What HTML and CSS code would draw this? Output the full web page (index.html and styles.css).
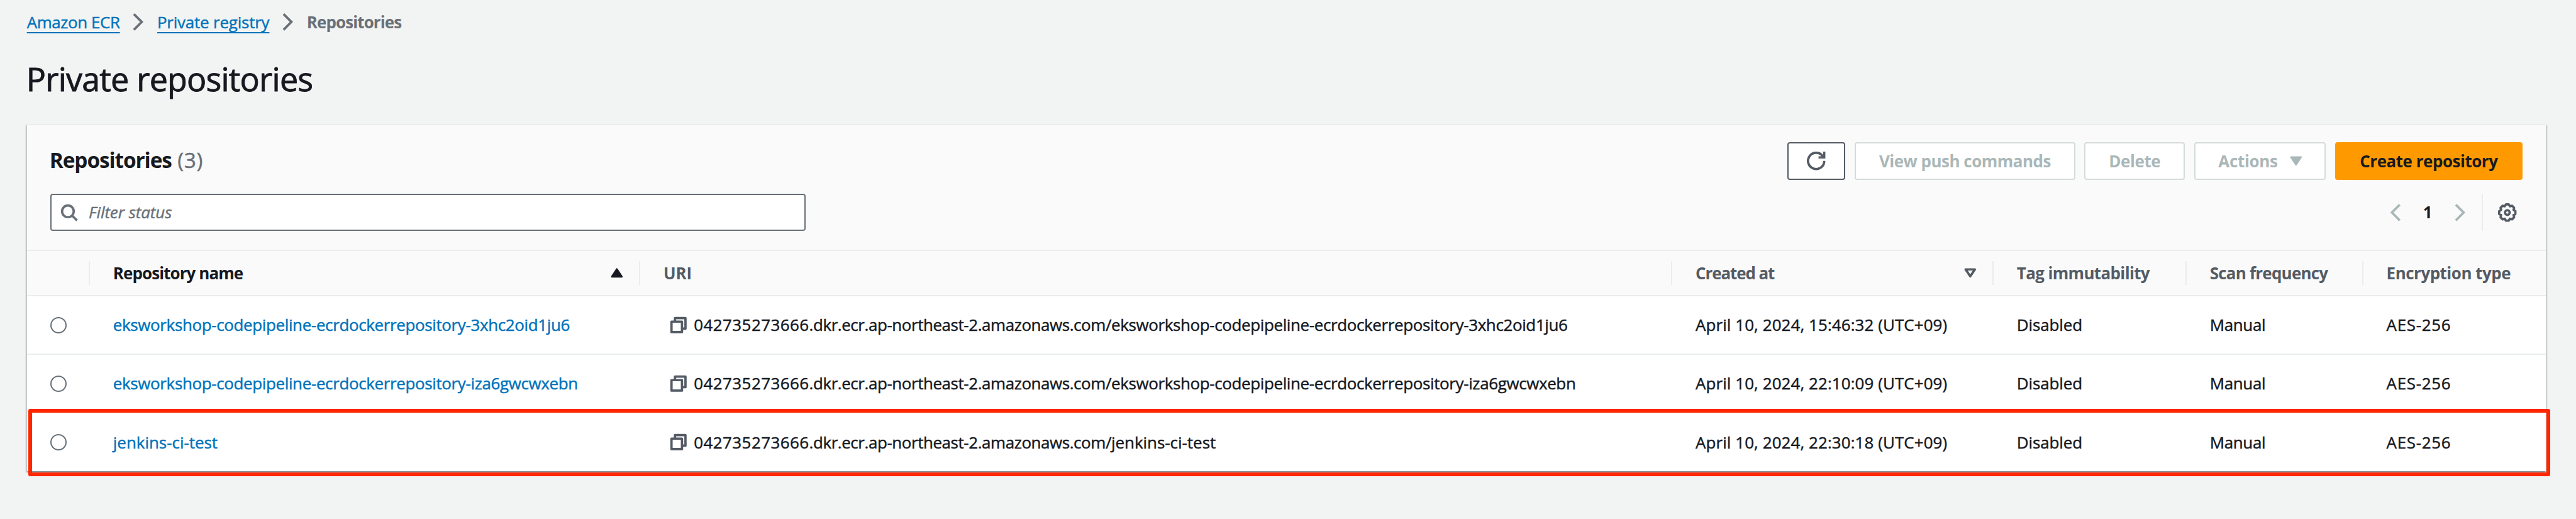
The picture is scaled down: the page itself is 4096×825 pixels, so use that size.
FILE: index.html
```html
<!DOCTYPE html>
<html lang="en">
<head>
<meta charset="utf-8">
<title>Private repositories</title>
<link rel="stylesheet" href="styles.css">
</head>
<body>
<svg class="sprite" aria-hidden="true">
  <symbol id="angle-right" viewBox="0 0 32 32"><path class="line" d="M8.5 2.5 22 16 8.5 29.5"/></symbol>
  <symbol id="angle-left" viewBox="0 0 32 32"><path class="line" d="M23.5 2.5 10 16 23.5 29.5"/></symbol>
  <symbol id="search" viewBox="0 0 32 32"><circle class="line" cx="14" cy="14" r="10"/><path class="line" d="M21 21l8.7 8.7"/></symbol>
  <symbol id="refresh" viewBox="0 0 32 32"><path class="line" d="M30 16A14 14 0 1 1 27.4 7.8M30 0v10H20"/><path class="solid" d="M24 4.5 29 10H25Z"/></symbol>
  <symbol id="caret-up" viewBox="0 0 32 32"><path class="solid round" d="M16 9.5 24.5 22.5H7.500Z"/></symbol>
  <symbol id="caret-down" viewBox="0 0 32 32"><path class="solid round" d="M16 22.500 7.500 9.500H24.500Z"/></symbol>
  <symbol id="caret-down-outline" viewBox="0 0 32 32"><path class="line join" d="M8 10H24L16 21.800Z"/></symbol>
  <symbol id="copy" viewBox="0 0 32 32"><path class="line join" d="M4 10H22V28H4ZM10 10V4H28V22H22"/></symbol>
  <symbol id="gear" viewBox="-16 -16 32 32"><path class="line join" d="M-2.400-14H2.400L4.400-10.700 8.200-11.600 11.600-8.200 10.700-4.400 14-2.400V2.400L10.700 4.400 11.600 8.200 8.200 11.600 4.400 10.700 2.400 14H-2.400L-4.400 10.700-8.200 11.600-11.600 8.200-10.700 4.400-14 2.400V-2.400L-10.700-4.400-11.600-8.200-8.200-11.600-4.400-10.700Z"/><circle class="line" r="4"/></symbol>
</svg>

<nav class="breadcrumbs">
  <a class="crumb crumb-ecr" href="#">Amazon ECR</a>
  <svg class="icon"><use href="#angle-right"/></svg>
  <a class="crumb crumb-registry" href="#">Private registry</a>
  <svg class="icon"><use href="#angle-right"/></svg>
  <span class="crumb-current">Repositories</span>
</nav>

<h1 class="page-title">Private repositories</h1>

<section class="panel">
  <header class="panel-head">
    <div class="title-row">
      <h2 class="panel-title">Repositories <span class="counter">(3)</span></h2>
      <div class="actions">
        <button class="btn btn-icon"><svg class="icon"><use href="#refresh"/></svg></button>
        <button class="btn btn-disabled btn-push">View push commands</button>
        <button class="btn btn-disabled btn-delete">Delete</button>
        <button class="btn btn-disabled btn-menu">Actions<svg class="icon"><use href="#caret-down"/></svg></button>
        <button class="btn btn-primary">Create repository</button>
      </div>
    </div>
    <div class="filter-row">
      <div class="filter"><svg class="icon"><use href="#search"/></svg><span class="placeholder">Filter status</span></div>
      <div class="paging">
        <svg class="icon muted"><use href="#angle-left"/></svg>
        <span class="page">1</span>
        <svg class="icon muted"><use href="#angle-right"/></svg>
        <span class="settings"><svg class="icon"><use href="#gear"/></svg></span>
      </div>
    </div>
  </header>

  <div class="row row-head">
    <div class="th"></div>
    <div class="th sorted"><span class="h-name">Repository name</span><svg class="icon"><use href="#caret-up"/></svg></div>
    <div class="th"><span class="h-uri">URI</span></div>
    <div class="th"><span class="h-created">Created at</span><svg class="icon"><use href="#caret-down-outline"/></svg></div>
    <div class="th"><span class="h-tag">Tag immutability</span></div>
    <div class="th"><span class="h-scan">Scan frequency</span></div>
    <div class="th"><span class="h-enc">Encryption type</span></div>
  </div>

  <div class="row">
    <div class="td"><span class="radio"></span></div>
    <div class="td"><a class="link" href="#">eksworkshop-codepipeline-ecrdockerrepository-3xhc2oid1ju6</a></div>
    <div class="td uri"><svg class="icon"><use href="#copy"/></svg><span class="host"><span class="account">042735273666</span>.dkr.ecr.ap-northeast-2.amazonaws.com/<span class="path">eksworkshop-codepipeline-ecrdockerrepository-3xhc2oid1ju6</span></span></div>
    <div class="td date">April 10, 2024, 15:46:32 (UTC+09)</div>
    <div class="td state">Disabled</div>
    <div class="td scan">Manual</div>
    <div class="td enc">AES-256</div>
  </div>

  <div class="row">
    <div class="td"><span class="radio"></span></div>
    <div class="td"><a class="link" href="#">eksworkshop-codepipeline-ecrdockerrepository-iza6gwcwxebn</a></div>
    <div class="td uri"><svg class="icon"><use href="#copy"/></svg><span class="host"><span class="account">042735273666</span>.dkr.ecr.ap-northeast-2.amazonaws.com/<span class="path">eksworkshop-codepipeline-ecrdockerrepository-iza6gwcwxebn</span></span></div>
    <div class="td date">April 10, 2024, 22:10:09 (UTC+09)</div>
    <div class="td state">Disabled</div>
    <div class="td scan">Manual</div>
    <div class="td enc">AES-256</div>
  </div>

  <div class="row row-marked">
    <div class="td"><span class="radio"></span></div>
    <div class="td"><a class="link link-short" href="#">jenkins-ci-test</a></div>
    <div class="td uri"><svg class="icon"><use href="#copy"/></svg><span class="host"><span class="account">042735273666</span>.dkr.ecr.ap-northeast-2.amazonaws.com/<span class="path path-short">jenkins-ci-test</span></span></div>
    <div class="td date">April 10, 2024, 22:30:18 (UTC+09)</div>
    <div class="td state">Disabled</div>
    <div class="td scan">Manual</div>
    <div class="td enc">AES-256</div>
    <div class="marker"></div>
  </div>
</section>
</body>
</html>
```
FILE: styles.css
```css
html { font-size: 9.2711px; }
* { box-sizing: border-box; }
body {
  margin: 0;
  height: 825px;
  overflow: hidden;
  background: #f2f3f3;
  color: #16191f;
  font-family: "Open Sans", "Noto Sans", sans-serif;
  font-size: 2.8rem;
  line-height: 4.4rem;
  white-space: nowrap;
}
.sprite { position: absolute; width: 0; height: 0; }
.icon { width: 3.2rem; height: 3.2rem; flex: none; display: block; overflow: visible; }
.line { fill: none; stroke: currentColor; stroke-width: 4; }
.join { stroke-linejoin: round; }
.solid { fill: currentColor; }
.round { stroke: currentColor; stroke-width: 3; stroke-linejoin: round; }

/* Regular text is drawn a touch heavier than Open Sans 400 */
.crumb, .counter, .placeholder, .td { -webkit-text-stroke: .45px currentColor; }

.breadcrumbs {
  display: flex;
  align-items: center;
  gap: 1.6rem;
  height: 4.4rem;
  margin: 1.6rem 0 0 4.6rem;
  color: #687078;
}
.crumb {
  color: #0073bb;
  text-decoration: underline;
  text-decoration-thickness: 2px;
  text-underline-offset: .67rem;
  text-decoration-skip-ink: none;
}
.crumb-ecr { letter-spacing: -.4px; }
.crumb-registry { letter-spacing: -.2px; }
.crumb-current { font-weight: 700; letter-spacing: -.87px; }

.page-title {
  margin: 3.9rem 0 4.1rem 4.5rem;
  font-size: 5.6rem;
  line-height: 7.2rem;
  font-weight: 400;
  letter-spacing: -.75px;
  -webkit-text-stroke: .9px currentColor;
}

.panel {
  width: 432rem;
  margin-left: 4.6rem;
  background: #fff;
  border-top: 2px solid #eaeded;
  box-shadow: 0 2px 2px rgba(0, 28, 36, .3), 2px 2px 2px rgba(0, 28, 36, .15), -2px 2px 2px rgba(0, 28, 36, .15);
}
.panel-head {
  height: 21.6rem;
  padding: 3rem 4rem 0;
  background: #fafafa;
  border-bottom: 2px solid #eaeded;
}
.title-row, .filter-row { display: flex; justify-content: space-between; height: 6.4rem; }
.filter-row { margin-top: 2.4rem; }
.panel-title { margin: 0 0 0 -.1rem; font-size: 3.6rem; line-height: 6.1rem; letter-spacing: -1.08px; }
.counter { margin-left: .2rem; font-weight: 400; color: #687078; letter-spacing: .7px; }

.actions { display: flex; gap: 1.6rem; }
.btn {
  display: flex;
  align-items: center;
  justify-content: center;
  height: 6.4rem;
  padding: 0;
  background: #fff;
  border: 2px solid #545b64;
  border-radius: 4px;
  color: #545b64;
  font: 700 2.8rem/4.4rem "Open Sans", "Noto Sans", sans-serif;
}
.btn-icon { width: 10rem; }
.btn-disabled { border-color: #d5dbdb; color: #aab7b8; letter-spacing: -.48px; }
.btn-push { width: 37.8rem; }
.btn-delete { width: 17.2rem; letter-spacing: -.38px; }
.btn-menu { width: 22.6rem; gap: 1.6rem; padding-left: .7rem; letter-spacing: -.3px; }
.btn-primary { width: 32.1rem; background: #f90; border-color: #f90; color: #16191f; letter-spacing: -.45px; }

.filter {
  display: flex;
  align-items: center;
  gap: 1.8rem;
  width: 129.600rem;
  padding-left: 1.4rem;
  background: #fff;
  border: 2px solid #687078;
  border-radius: 4px;
  color: #687078;
}
.placeholder { font-style: italic; letter-spacing: -.05px; }
.paging { display: flex; align-items: center; font-weight: 700; }
.page { width: 7.95rem; text-align: center; }
.muted { color: #aab7b8; }
.settings {
  display: flex;
  align-items: center;
  height: 6.4rem;
  margin-left: 2.05rem;
  padding: 0 1rem 0 2.6rem;
  border-left: 2px solid #eaeded;
  color: #545b64;
}

.row {
  display: grid;
  grid-template-columns: 10.8rem 94.4rem 177rem 55.1rem 33.1rem 30.3rem 31.3rem;
  height: 10rem;
  border-bottom: 2px solid #eaeded;
}
.row-head { height: 7.8rem; padding: 1.8rem 0; background: #fafafa; font-weight: 700; color: #545b64; }
.th {
  display: flex;
  align-items: center;
  justify-content: space-between;
  height: 4rem;
  padding: 0 2.2rem 0 4rem;
  border-right: 2px solid #eaeded;
}
.th:last-child { border-right: 0; }
.sorted { color: #16191f; }
.h-name { letter-spacing: -.9px; }
.h-uri { letter-spacing: -.1px; }
.h-created { letter-spacing: -1.07px; }
.h-tag { letter-spacing: -.62px; }
.h-scan { letter-spacing: -.75px; }
.h-enc { letter-spacing: -.48px; }

.td { display: flex; align-items: center; padding: .1rem 0 0 4rem; }
.radio { width: 2.8rem; height: 2.8rem; border: 2px solid #687078; border-radius: 50%; background: #fff; }
.link { color: #0073bb; text-decoration: none; letter-spacing: -.35px; }
.link-short { letter-spacing: -.02px; }
.uri { padding-left: 5rem; gap: 1rem; }
.uri .icon { color: #545b64; }
.host { letter-spacing: -.42px; }
.account { letter-spacing: .45px; }
.path { letter-spacing: -.36px; }
.path-short { letter-spacing: -.02px; }
.date { letter-spacing: .09px; }
.state { letter-spacing: -.12px; }
.scan { letter-spacing: -.33px; }
.enc { letter-spacing: .67px; }

.row-marked { position: relative; border-bottom: 0; }
.marker {
  position: absolute;
  left: .25rem;
  top: -.7rem;
  width: 432.500rem;
  height: 11.55rem;
  border: .65rem solid #ff2600;
  border-radius: 3px;
}
```
